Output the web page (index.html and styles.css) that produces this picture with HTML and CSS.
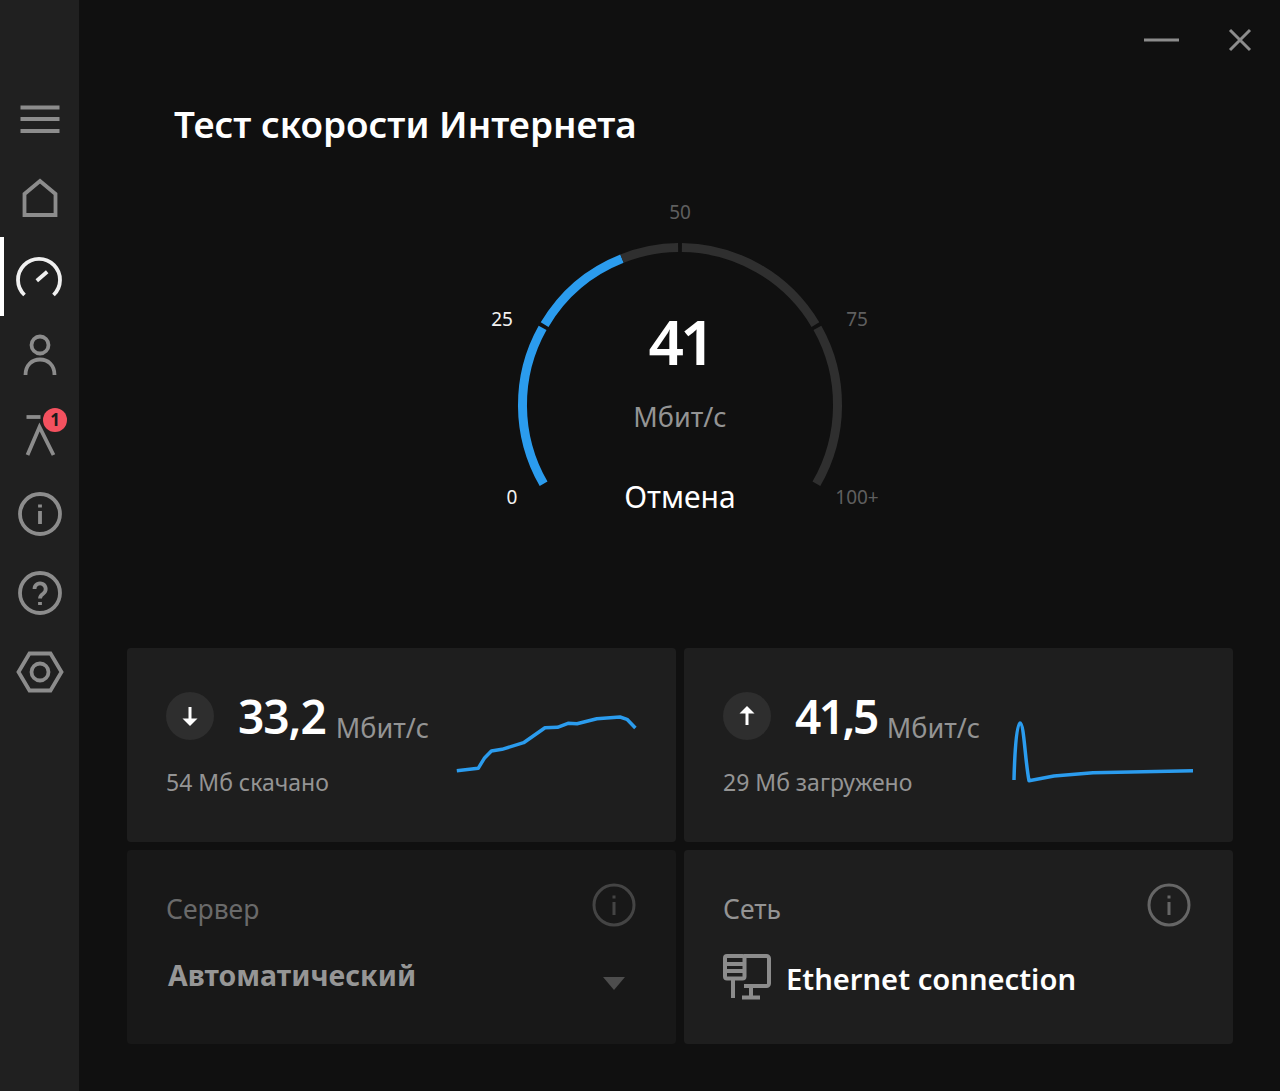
FILE: index.html
```html
<!DOCTYPE html>
<html lang="ru">
<head>
    <meta charset="UTF-8">
    <meta name="viewport" content="width=device-width, initial-scale=1.0">
    <title>Тест скорости Интернета</title>
    <link rel="stylesheet" href="styles.css">
</head>
<body>
    <nav class="sidebar">
        <div class="nav-item">
            <svg class="nav-icon" viewBox="0 0 48 48"><path d="M4.5 12.5H43.5M4.5 24H43.5M4.5 36H43.5"/></svg>
        </div>
        <div class="nav-item">
            <svg class="nav-icon" viewBox="0 0 48 48"><path d="M24 7L8.5 20V41H39.5V20Z"/></svg>
        </div>
        <div class="nav-item active">
            <svg class="nav-icon" viewBox="0 0 48 48"><path d="M9.5 42A21 21 0 1 1 38.5 42"/><path d="M21.8 27.7L32.2 18.7"/></svg>
        </div>
        <div class="nav-item">
            <svg class="nav-icon" viewBox="0 0 48 48"><circle cx="24" cy="13" r="8.5"/><path d="M9.5 43C9.5 33 16 27.5 24 27.5S38.5 33 38.5 43"/></svg>
        </div>
        <div class="nav-item">
            <svg class="nav-icon" viewBox="0 0 48 48"><path d="M10.5 6H24.5"/><path d="M11.5 44L23.5 16L37.5 44"/></svg>
            <span class="nav-badge">1</span>
        </div>
        <div class="nav-item">
            <svg class="nav-icon" viewBox="0 0 48 48"><circle cx="24" cy="24" r="20"/><path d="M24 21V34M24 14.5V17.5"/></svg>
        </div>
        <div class="nav-item">
            <svg class="nav-icon" viewBox="0 0 48 48"><circle cx="24" cy="24" r="20"/><path d="M18.5 20A5.6 5.6 0 1 1 27.4 24.5C25 26.2 24 27 24 29.5M24 33V36"/></svg>
        </div>
        <div class="nav-item">
            <svg class="nav-icon" viewBox="0 0 48 48"><path d="M2.5 24L13.5 5.5H34.5L45.5 24L34.5 42.5H13.5Z"/><circle cx="24" cy="24" r="8.5"/></svg>
        </div>
    </nav>

    <main class="content">
        <div class="window-controls">
            <svg class="control-min" viewBox="0 0 35 4"><path d="M0 2H35"/></svg>
            <svg class="control-close" viewBox="0 0 24 24"><path d="M2 2L22 22M22 2L2 22"/></svg>
        </div>

        <h1 class="page-title">Тест скорости Интернета</h1>

        <div class="gauge">
            <svg class="gauge-dial" viewBox="0 0 400 330">
                <g transform="translate(200 210)">
                    <path class="arc-on" d="M-136.4 78.75A157.5 157.5 0 0 1 -137.4 -77.1"/>
                    <path class="arc-on" d="M-135.4 -80.4A157.5 157.5 0 0 1 -58 -146.4"/>
                    <path class="arc-off" d="M-58 -146.4A157.5 157.5 0 0 1 -1.9 -157.5"/>
                    <path class="arc-off" d="M1.9 -157.5A157.5 157.5 0 0 1 135.4 -80.4"/>
                    <path class="arc-off" d="M137.4 -77.1A157.5 157.5 0 0 1 136.4 78.75"/>
                </g>
            </svg>
            <span class="tick tick-on tick-0">0</span>
            <span class="tick tick-on tick-25">25</span>
            <span class="tick tick-50">50</span>
            <span class="tick tick-75">75</span>
            <span class="tick tick-100">100+</span>
            <div class="gauge-value">41</div>
            <div class="gauge-unit">Мбит/с</div>
            <div class="gauge-cancel">Отмена</div>
        </div>

        <div class="cards">
            <section class="card stat-card">
                <div class="stat-info">
                    <div class="stat-top">
                        <span class="stat-arrow">
                            <svg viewBox="0 0 20 20"><path class="arrow-line" d="M10 1V13"/><path class="arrow-head" d="M2.500 12.500H17.500L10 20Z"/></svg>
                        </span>
                        <span class="stat-value">33,2</span>
                        <span class="stat-unit">Мбит/с</span>
                    </div>
                    <div class="stat-sub">54 Мб скачано</div>
                </div>
                <svg class="spark" viewBox="0 0 190 80"><polyline points="6.8,60.7 28.2,58.3 34.3,48.3 41.4,41 52,39.3 73.6,32.7 95,17.7 107.5,17.3 118,13.3 127,13.7 146.8,8.700 170,7 177,9.300 185.4,18"/></svg>
            </section>

            <section class="card stat-card">
                <div class="stat-info">
                    <div class="stat-top">
                        <span class="stat-arrow">
                            <svg viewBox="0 0 20 20"><path class="arrow-line" d="M10 19V7"/><path class="arrow-head" d="M2.500 7.500H17.500L10 0Z"/></svg>
                        </span>
                        <span class="stat-value tight">41,5</span>
                        <span class="stat-unit">Мбит/с</span>
                    </div>
                    <div class="stat-sub">29 Мб загружено</div>
                </div>
                <svg class="spark" viewBox="0 0 190 80"><path d="M7 70C7.500 50 9 13 13 13C17 13 18 50 22 70.700L47 66L86 62.700L186 60.700"/></svg>
            </section>

            <section class="card option-card disabled">
                <div class="option-head">
                    <span class="option-label">Сервер</span>
                    <svg class="info-icon" viewBox="0 0 44 44"><circle cx="22" cy="22" r="20"/><path d="M22 19V32M22 12.500V15.500"/></svg>
                </div>
                <div class="option-body">
                    <span class="option-text">Автоматический</span>
                    <span class="option-caret"></span>
                </div>
            </section>

            <section class="card option-card">
                <div class="option-head">
                    <span class="option-label">Сеть</span>
                    <svg class="info-icon" viewBox="0 0 44 44"><circle cx="22" cy="22" r="20"/><path d="M22 19V32M22 12.500V15.500"/></svg>
                </div>
                <div class="option-body">
                    <svg class="net-icon" viewBox="0 0 48 46">
                        <path d="M21 2H43.500A2.500 2.500 0 0 1 46 4.500V29.500A2.500 2.500 0 0 1 43.500 32H21"/>
                        <rect x="2" y="2" width="19.500" height="22.500" rx="2"/>
                        <path d="M2 10H21M2 17H21M10 24.500V44M19 43.500H37M28 32V43"/>
                    </svg>
                    <span class="option-text">Ethernet connection</span>
                </div>
            </section>
        </div>
    </main>
</body>
</html>
```

FILE: styles.css
```css
* {
    box-sizing: border-box;
}

body {
    font-family: "Noto Sans", "Open Sans", sans-serif;
    display: flex;
    height: 100vh;
    margin: 0;
    background-color: #101010;
    color: #fff;
    overflow: hidden;
}

/* Боковая панель */
.sidebar {
    width: 79px;
    flex-shrink: 0;
    padding-top: 79px;
    background-color: #202020;
}

.nav-item {
    position: relative;
    display: flex;
    align-items: center;
    justify-content: center;
    height: 79px;
}

.nav-item.active {
    border-left: 4px solid #fff;
    padding-right: 6px;
}

.nav-icon {
    width: 48px;
    height: 48px;
    fill: none;
    stroke: #8c8c8c;
    stroke-width: 3.800;
}

.nav-item.active .nav-icon {
    stroke: #f0f0f0;
}

.nav-badge {
    position: absolute;
    top: 13px;
    left: 43px;
    width: 24px;
    height: 24px;
    border-radius: 50%;
    background-color: #f4515f;
    color: #1c1c1c;
    font-size: 17px;
    font-weight: 700;
    line-height: 24px;
    text-align: center;
}

/* Основная часть */
.content {
    flex: 1;
    display: flex;
    flex-direction: column;
    padding: 0 47px 47px 48px;
}

.window-controls {
    display: flex;
    align-items: center;
    justify-content: flex-end;
    gap: 49px;
    height: 24px;
    margin: 28px -19px 0 0;
    fill: none;
    stroke: #8c8c8c;
    stroke-width: 3;
}

.control-min {
    width: 35px;
    height: 4px;
}

.control-close {
    width: 24px;
    height: 24px;
}

.page-title {
    margin: 47px 0 0 47px;
    font-size: 36.800px;
    font-weight: 600;
    line-height: 50px;
}

.gauge {
    position: relative;
    width: 400px;
    height: 330px;
    margin: 46px auto 0;
}

.gauge-dial {
    display: block;
    width: 400px;
    height: 330px;
    fill: none;
    stroke-width: 9;
}

.arc-on {
    stroke: #2b9cee;
}

.arc-off {
    stroke: #2f2f2f;
}

.tick {
    position: absolute;
    transform: translate(-50%, -50%);
    color: #5f5f5f;
    font-size: 19px;
    line-height: 24px;
}

.tick-on {
    color: #f2f2f2;
}

.tick-0 { left: 32px; top: 302px; }
.tick-25 { left: 22px; top: 124px; }
.tick-50 { left: 200px; top: 17px; }
.tick-75 { left: 377px; top: 124px; }
.tick-100 { left: 377px; top: 302px; }

.gauge-value,
.gauge-unit,
.gauge-cancel {
    position: absolute;
    left: 0;
    width: 100%;
    text-align: center;
}

.gauge-value {
    top: 104px;
    font-size: 62px;
    font-weight: 600;
    letter-spacing: -4px;
    line-height: 84px;
}

.gauge-unit {
    top: 204px;
    color: #949494;
    font-size: 27px;
    line-height: 36px;
}

.gauge-cancel {
    top: 283px;
    font-size: 30px;
    line-height: 38px;
}

/* Карточки */
.cards {
    display: grid;
    grid-template-columns: 1fr 1fr;
    grid-auto-rows: 194px;
    gap: 8px;
    margin-top: auto;
}

.card {
    border-radius: 4px;
    background-color: #1e1e1e;
}

.card.disabled {
    background-color: #181818;
}

.stat-card {
    display: flex;
    padding: 43px 36px 0 39px;
}

.stat-info {
    flex: 1;
}

.stat-top {
    display: flex;
    align-items: center;
    height: 49px;
}

.stat-arrow {
    display: flex;
    align-items: center;
    justify-content: center;
    width: 48px;
    height: 48px;
    margin-right: 24px;
    border-radius: 50%;
    background-color: #2e2e2e;
}

.stat-arrow svg {
    width: 20px;
    height: 20px;
}

.arrow-line {
    fill: none;
    stroke: #fff;
    stroke-width: 3;
}

.arrow-head {
    fill: #fff;
}

.stat-value {
    font-size: 46px;
    font-weight: 600;
    letter-spacing: -1px;
    line-height: 56px;
}

.stat-value.tight {
    letter-spacing: -2.500px;
}

.stat-unit {
    margin: 24px 0 0 10px;
    color: #949494;
    font-size: 27px;
    line-height: 36px;
}

.stat-sub {
    margin-top: 26px;
    color: #949494;
    font-size: 23px;
    line-height: 32px;
}

.spark {
    width: 190px;
    height: 80px;
    margin-top: 19px;
    fill: none;
    stroke: #2b9cee;
    stroke-width: 3.500;
    stroke-linejoin: round;
}

.option-card {
    padding: 33px 39px 0;
}

.option-head {
    display: flex;
    align-items: flex-start;
    justify-content: space-between;
}

.option-label {
    margin-top: 8px;
    color: #949494;
    font-size: 26.500px;
    line-height: 36px;
}

.info-icon {
    width: 44px;
    height: 44px;
    margin-right: 3px;
    fill: none;
    stroke: #666;
    stroke-width: 3;
}

.option-body {
    display: flex;
    align-items: center;
    margin-top: 27px;
}

.option-text {
    font-size: 29.200px;
    font-weight: 600;
    line-height: 40px;
}

.net-icon + .option-text {
    margin-top: 4px;
}

.net-icon {
    width: 48px;
    height: 46px;
    margin-right: 15px;
    fill: none;
    stroke: #8c8c8c;
    stroke-width: 4;
}

.disabled .option-label {
    color: #6a6a6a;
}

.disabled .info-icon {
    margin-right: 1px;
    stroke: #444;
}

.disabled .option-text {
    margin: 1px 0 0 2px;
    color: #969696;
    font-size: 28.500px;
    font-weight: 700;
}

.option-caret {
    width: 0;
    height: 0;
    margin: 17px 12px 0 auto;
    border-left: 11px solid transparent;
    border-right: 11px solid transparent;
    border-top: 13px solid #4d4d4d;
}
```
